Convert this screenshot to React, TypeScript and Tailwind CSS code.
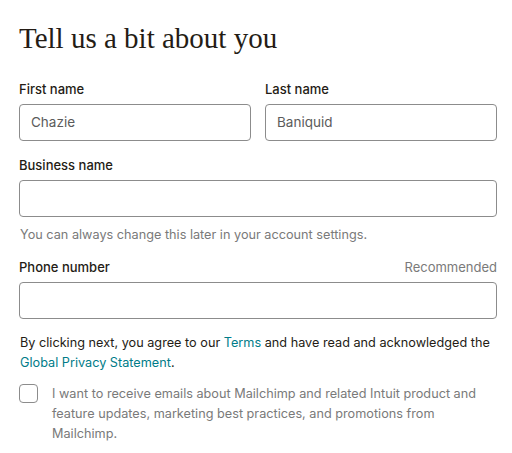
import React from 'react';

const sans = "font-['Inter','Liberation_Sans',Arial,sans-serif]";

function Field({ label, value, aside }: { label: string; value?: string; aside?: string }) {
  return (
    <div className="flex flex-col">
      <div className="flex items-end justify-between h-5 mb-[6px]">
        <span className="text-[13px] leading-[18px] font-medium text-[#241c15]">{label}</span>
        {aside && <span className="text-[13px] leading-[18px] text-[#7a7a7a]">{aside}</span>}
      </div>
      <div className="h-[37px] rounded-[4px] border border-[#8c8c8c] bg-white px-[11px] flex items-center">
        <span className="text-[13.5px] text-[#5b5b5b]">{value}</span>
      </div>
    </div>
  );
}

export default function App() {
  return (
    <div className={`w-[512px] h-[453px] bg-white pl-[19px] pr-[15px] ${sans}`}>
      <h1 className="pt-[20px] h-[78px] text-[29px] leading-[36px] text-[#241c15] font-['Liberation_Serif',serif]">
        Tell us a bit about you
      </h1>

      <div className="grid grid-cols-2 gap-[14px]">
        <Field label="First name" value="Chazie" />
        <Field label="Last name" value="Baniquid" />
      </div>

      <div className="mt-[13px]">
        <Field label="Business name" />
        <p className="mt-[8px] h-5 leading-5 text-[12.7px] text-[#7a7a7a] pl-px">
          You can always change this later in your account settings.
        </p>
      </div>

      <div className="mt-[11px]">
        <Field label="Phone number" aside="Recommended" />
      </div>

      <p className="mt-[14px] text-[12.7px] leading-[19.5px] text-[#241c15] pl-px">
        By clicking next, you agree to our <span className="text-[#007c89]">Terms</span> and have read and acknowledged the{' '}
        <span className="text-[#007c89]">Global Privacy Statement</span>.
      </p>

      <div className="mt-[11px] flex items-start gap-[14px]">
        <div className="mt-px w-[19px] h-[19px] shrink-0 rounded-[4px] border border-[#8c8c8c] bg-white" />
        <p className="pt-[1px] text-[12.7px] leading-5 text-[#7a7a7a]">
          I want to receive emails about Mailchimp and related Intuit product and feature updates, marketing best practices, and promotions from Mailchimp.
        </p>
      </div>
    </div>
  );
}
